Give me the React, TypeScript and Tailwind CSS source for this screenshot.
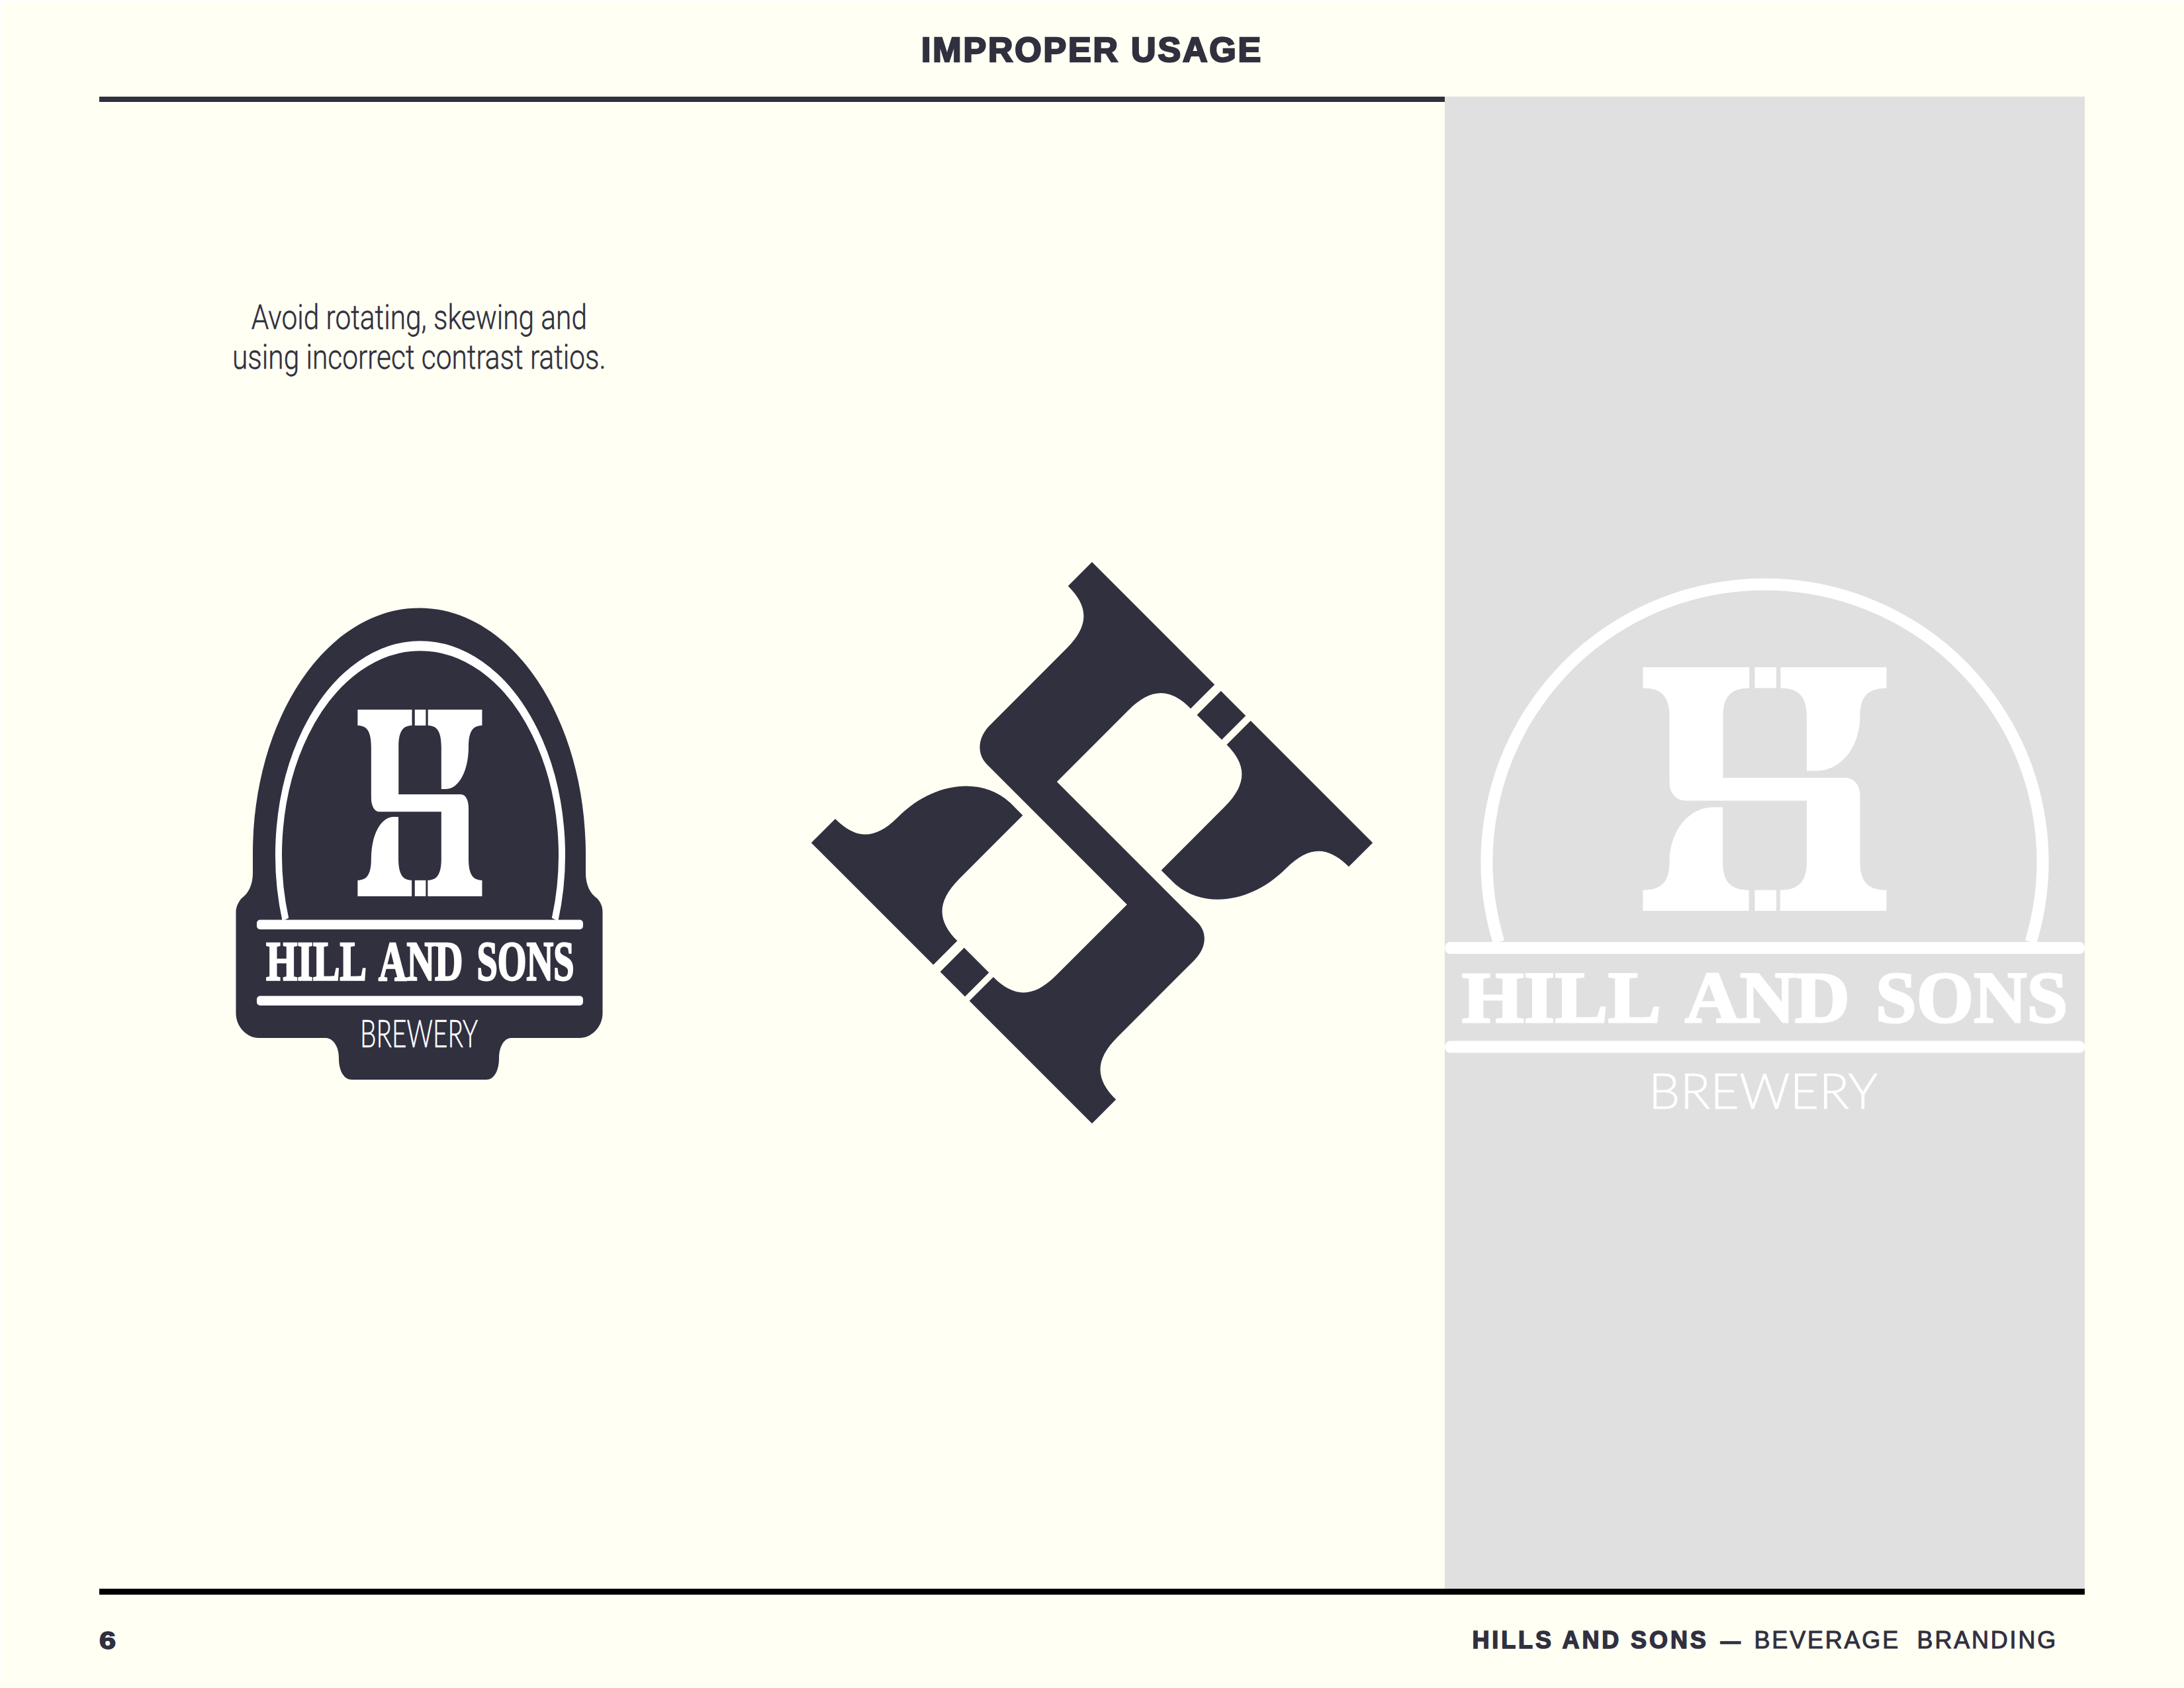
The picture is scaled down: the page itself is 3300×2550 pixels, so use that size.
const ink = '#30303f'

function HsMark({ transform, fill }: { transform: string; fill: string }) {
  return (
    <g transform={transform} fill={fill}>
      <path d="M0 0H160.7V31.4C135 31.4 121 42 121 73.5V167H305C319 167 328 178 328 194V294.5C328 326 342 336.6 368 336.6V368H207.3V336.6C233 336.6 247.4 326 247.4 294.5V201.5H64C50 201.5 40 190 40 174V73.5C40 42 26 31.4 0 31.4Z" />
      <path d="M208 0H368V31.4C342 31.4 328 42 328 73.5C328 122 298 156.6 262 156.6H247.4V73.5C247.4 42 233 31.4 208 31.4Z" />
      <path transform="rotate(180 184 184)" d="M208 0H368V31.4C342 31.4 328 42 328 73.5C328 122 298 156.6 262 156.6H247.4V73.5C247.4 42 233 31.4 208 31.4Z" />
      <rect x="169" y="0" width="32.5" height="31.4" />
      <rect x="169" y="336.6" width="32.5" height="31.4" />
    </g>
  )
}

function BadgeLogo() {
  return (
    <svg width="556" height="714" viewBox="356 916 556 714">
      <path
        fill={ink}
        d="M382 1288C382 1083 494 916.5 633.7 916.5C773 916.5 885 1083 885 1288V1317C885 1335 892 1348 902 1355C908 1361 910.5 1368 910.5 1376V1528.5C910.5 1550 893 1566 876 1566H773C762 1566 754 1578 754 1597C754 1616 746 1629 735 1629H531.7C520 1629 512 1616 512 1597C512 1578 503 1566 492 1566H391C374 1566 356.5 1550 356.5 1528.5V1376C356.5 1368 360 1361 365 1355C375 1348 382 1335 382 1317Z"
      />
      <g transform="translate(635 1290) scale(1 1.5)">
        <path fill="none" stroke="#fff" strokeWidth="10" d="M-203.6 64.7A214 210.7 0 1 1 203.6 64.7" />
      </g>
      <HsMark transform="translate(540.4 1070) scale(0.511 0.766)" fill="#fff" />
      <rect x="388" y="1387.5" width="493" height="14.5" rx="5" fill="#fff" />
      <rect x="388" y="1502.5" width="493" height="14.5" rx="5" fill="#fff" />
      <g fill="#fff" stroke="#fff" strokeWidth="2.6" fontSize="84" className="font-['Liberation_Serif'] font-bold">
        <text transform="translate(402 1479) scale(0.724 1)">HILL</text>
        <text transform="translate(572 1479) scale(0.7 1)">AND</text>
        <text transform="translate(720.5 1479) scale(0.67 1)">SONS</text>
      </g>
      <text transform="translate(544 1580) scale(0.68 1)" fill="#fff" stroke="#fff" strokeWidth="0.6" fontSize="57" className="font-['Lato'] font-light">
        BREWERY
      </text>
    </svg>
  )
}

function RotatedMark() {
  return (
    <svg width="850" height="850" viewBox="1225 848 850 850">
      <HsMark transform="translate(1650 848) rotate(45) scale(1.63)" fill={ink} />
    </svg>
  )
}

function GhostLogo() {
  return (
    <svg width="967" height="830" viewBox="2183 860 967 830">
      <path fill="none" stroke="#fff" strokeWidth="18" d="M2264.5 1423A420 419 0 1 1 3068.5 1423" />
      <HsMark transform="translate(2482.5 1008)" fill="#fff" />
      <rect x="2183.4" y="1423" width="966.6" height="18" rx="8" fill="#fff" />
      <rect x="2183.4" y="1572.5" width="966.6" height="18" rx="8" fill="#fff" />
      <g fill="#fff" stroke="#fff" strokeWidth="3" fontSize="110" className="font-['Liberation_Serif'] font-bold">
        <text transform="translate(2209 1543.5) scale(1.094 1)">HILL</text>
        <text transform="translate(2546 1543.5) scale(1.045 1)">AND</text>
        <text transform="translate(2834 1543.5) scale(1.01 1)">SONS</text>
      </g>
      <text transform="translate(2491 1674.5) scale(1.005 1)" fill="#fff" stroke="#fff" strokeWidth="0.7" fontSize="75" className="font-['Lato'] font-light">
        BREWERY
      </text>
    </svg>
  )
}

export default function App() {
  return (
    <div className="w-[3300px] h-[2550px] flex flex-col bg-[#fffff3] shadow-[inset_2px_2px_0_#ffffff] text-[#30303f] font-['Liberation_Sans',sans-serif]">
      <div className="h-[146px] flex items-center justify-center pt-[4px]">
        <h1 className="text-[52px] font-bold tracking-[2.8px] leading-none [-webkit-text-stroke:2.5px_#30303f]">IMPROPER USAGE</h1>
      </div>

      <div className="h-[2254px] px-[150px] flex">
        <div className="w-[2033px] border-t-8 border-[#30303f] flex">
          <div className="w-[967px] flex flex-col items-center pt-[296px]">
            <p className="text-[52px] leading-[60px] text-center whitespace-nowrap scale-x-[0.815] font-['Roboto',sans-serif] font-light [-webkit-text-stroke:0.5px_#30303f]">
              Avoid rotating, skewing and
              <br />
              using incorrect contrast ratios.
            </p>
            <div className="mt-[348px]">
              <BadgeLogo />
            </div>
          </div>
          <div className="w-[1066px] flex flex-col items-center pt-[695px]">
            <RotatedMark />
          </div>
        </div>
        <div className="w-[967px] bg-[#e0e0e0] pt-[714px]">
          <GhostLogo />
        </div>
      </div>

      <div className="h-[150px] px-[150px] flex flex-col">
        <div className="h-[9px] bg-black" />
        <div className="flex items-center justify-between pt-[49px] pr-[41px] text-[36px] leading-[40px] font-bold">
          <span className="origin-left scale-x-[1.25] [-webkit-text-stroke:1.5px_#30303f]">6</span>
          <span className="whitespace-pre">
            <span className="tracking-[3.9px] [-webkit-text-stroke:1.5px_#30303f]">HILLS AND SONS</span>
            <span className="inline-block ml-[18px] mr-[8px] text-[30px] [-webkit-text-stroke:1.5px_#30303f]">—</span>
            <span className="tracking-[2.8px] font-normal [-webkit-text-stroke:1px_#30303f]"> BEVERAGE  BRANDING</span>
          </span>
        </div>
      </div>
    </div>
  )
}
